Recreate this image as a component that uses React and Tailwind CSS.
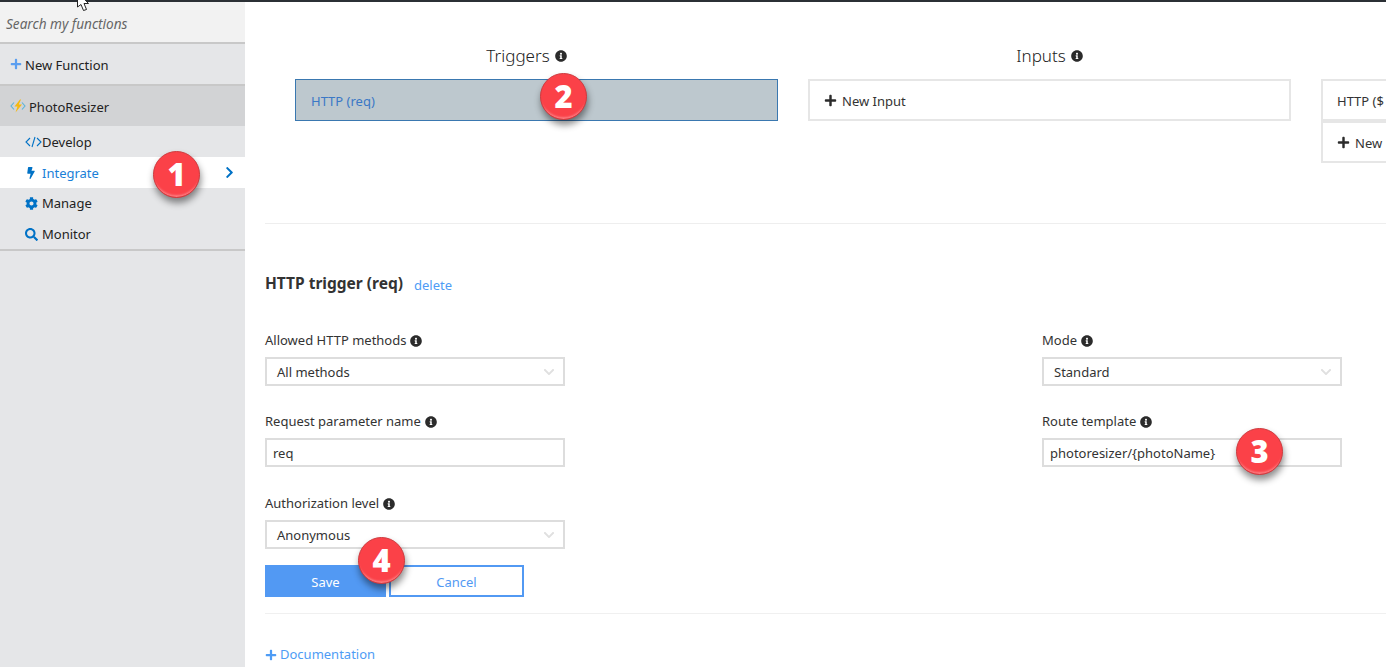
import { FaInfoCircle, FaPlus, FaBolt, FaCog, FaSearch, FaChevronRight, FaChevronDown } from 'react-icons/fa';

const FONT = { fontFamily: '"Noto Sans", "Open Sans", sans-serif' };

function Info({ className = '' }) {
  return <FaInfoCircle className={`inline-block text-[#2b2b2b] text-[12px] ${className}`} />;
}

// red numbered callout, sits on top of the page
function Badge({ n, className }) {
  return (
    <div
      className={`absolute w-[47px] h-[47px] rounded-full flex items-center justify-center text-white text-[31px] font-extrabold bg-[#fb4148] border border-[#cf3a3e] shadow-[1px_5px_7px_rgba(0,0,0,0.45),inset_0_-4px_2px_-2px_rgba(255,255,255,0.3)] ${className}`}
      style={{ fontFamily: '"Open Sans", sans-serif' }}
    >
      {n}
    </div>
  );
}

function NavRow({ icon, label, active, nudge }) {
  return (
    <div className={`h-[31px] flex items-center pl-[25px] pr-[9px] ${active ? 'bg-white text-[#1a7fd8]' : 'text-[#222]'}`}>
      <span className="w-[17px] flex justify-start text-[#0072c6] text-[13px]">{icon}</span>
      <span className={`text-[13px] ${nudge ? 'pt-[2px]' : ''}`}>{label}</span>
      {active && <FaChevronRight className="ml-auto text-[#0072c6] text-[13px]" />}
    </div>
  );
}

function Select({ value }) {
  return (
    <div className="h-[29px] w-[300px] border-2 border-[#dddddd] bg-white flex items-center pl-[10px] pr-[8px] text-[13px] text-[#333]">
      <span className="pt-[2px]">{value}</span>
      <FaChevronDown className="ml-auto text-[#e0e0e0] text-[12px]" />
    </div>
  );
}

function TextInput({ value }) {
  return (
    <div className="h-[29px] w-[300px] border-2 border-[#dddddd] bg-white flex items-center pl-[6px] pt-[2px] text-[13px] text-[#333]">
      {value}
    </div>
  );
}

function Field({ label, children, className = '' }) {
  return (
    <div className={className}>
      <div className="h-[17px] flex items-center gap-[4px] text-[13px] text-[#333] leading-none">
        {label} <Info />
      </div>
      <div className="mt-[8px]">{children}</div>
    </div>
  );
}

function BoxRow({ children, className = '' }) {
  return (
    <div className={`h-[42px] border-2 border-[#e6e6e6] flex items-center pl-[14px] text-[13px] text-[#333] whitespace-nowrap ${className}`}>
      {children}
    </div>
  );
}

function NewRow({ label, className = '' }) {
  return (
    <BoxRow className={className}>
      <FaPlus className="text-[#2b2b2b] text-[13px] mr-[5px] shrink-0" />
      <span className="pt-[4px]">{label}</span>
    </BoxRow>
  );
}

function ColHead({ title, className = '' }) {
  return (
    <div className={`h-[33px] mb-[7px] flex items-center justify-center gap-[5px] text-[17px] font-light text-[#222] ${className}`}>
      {title} <Info />
    </div>
  );
}

export default function App() {
  return (
    <div className="relative w-[1386px] h-[667px] overflow-hidden bg-white flex flex-col" style={FONT}>
      <div className="h-[2px] bg-[#2b3035] shrink-0" />

      <div className="flex flex-1 min-h-0">
        {/* Sidebar */}
        <aside className="w-[245px] shrink-0 bg-[#e5e6e8]">
          <div className="h-[42px] bg-[#f2f2f2] border-b-2 border-[#c8c8c8] flex items-center pl-[6px] pt-[4px] text-[13.6px] italic text-[#666]">
            Search my functions
          </div>
          <div className="h-[42px] border-b-2 border-[#c8c8c8] flex items-center pl-[10px] text-[13px] text-[#222]">
            <FaPlus className="text-[#5c9ff0] text-[12px] mr-[3px]" />
            <span className="pt-[4px]">New Function</span>
          </div>
          <div className="h-[40px] bg-[#d2d3d5] flex items-center pl-[10px] text-[13px] text-[#222]">
            <svg width="16" height="14" viewBox="0 0 16 14" className="mr-[3px]">
              <path d="M4 3.5 L1 7 L4 10.5" fill="none" stroke="#59b4d9" strokeWidth="1.1" />
              <path d="M12 3.5 L15 7 L12 10.5" fill="none" stroke="#59b4d9" strokeWidth="1.1" />
              <path d="M10 0.5 L4.5 7.5 H7.5 L5.5 13.5 L12 5.5 H8.8 L11 0.5 Z" fill="#f5b90f" />
            </svg>
            <span className="pt-[4px]">PhotoResizer</span>
          </div>
          <div className="border-b-2 border-[#c8c8c8] h-[125px]">
            <NavRow
              label="Develop"
              nudge
              icon={
                <svg width="17" height="12" viewBox="0 0 17 12" fill="none" stroke="#0072c6" strokeWidth="1.1">
                  <path d="M5 2 L1 6 L5 10" />
                  <path d="M10 1 L7 11" />
                  <path d="M12 2 L16 6 L12 10" />
                </svg>
              }
            />
            <NavRow label="Integrate" nudge active icon={<FaBolt className="text-[12px]" />} />
            <NavRow label="Manage" icon={<FaCog className="text-[13px]" />} />
            <NavRow label="Monitor" icon={<FaSearch className="text-[13px]" />} />
          </div>
        </aside>

        {/* Main */}
        <main className="flex-1 min-w-0 overflow-hidden pl-[20px]">
          <div className="flex gap-[30px] pl-[30px] pt-[37px] h-[222px] border-b border-[#eeeeee]">
            <div className="w-[483px] shrink-0">
              <ColHead title="Triggers" className="pr-[20px]" />
              <div className="h-[42px] bg-[#bdc8ce] border border-[#3a78b0] flex items-center pl-[15px] pt-[4px] text-[13px] text-[#3b78c6]">
                HTTP (req)
              </div>
            </div>
            <div className="w-[483px] shrink-0">
              <ColHead title="Inputs" />
              <NewRow label="New Input" />
            </div>
            <div className="w-[483px] shrink-0">
              <div className="h-[40px]" />
              <BoxRow className="pt-[4px]">HTTP ($</BoxRow>
              <NewRow label="New" />
            </div>
          </div>

          <div className="mt-[50px] h-[20px] flex items-center text-[#333]">
            <span className="text-[15.5px] font-bold">HTTP trigger (req)</span>
            <span className="ml-[11px] pt-[4px] text-[13px] text-[#4e9cf5]">delete</span>
          </div>

          <div className="mt-[38px] flex justify-between w-[1077px]">
            <div>
              <Field label="Allowed HTTP methods"><Select value="All methods" /></Field>
              <Field label="Request parameter name" className="mt-[27px]"><TextInput value="req" /></Field>
              <Field label="Authorization level" className="mt-[28px]"><Select value="Anonymous" /></Field>
            </div>
            <div>
              <Field label="Mode"><Select value="Standard" /></Field>
              <Field label="Route template" className="mt-[27px]"><TextInput value="photoresizer/{photoName}" /></Field>
            </div>
          </div>

          <div className="mt-[16px] flex gap-[3px]">
            <div className="w-[121px] h-[32px] bg-[#5299f3] text-white text-[13px] pt-[4px] flex items-center justify-center">Save</div>
            <div className="w-[135px] h-[32px] border-2 border-[#5299f3] text-[#5299f3] text-[13px] pt-[4px] flex items-center justify-center">Cancel</div>
          </div>

          <div className="mt-[16px] border-t border-[#f0f0f0]" />

          <div className="mt-[31px] flex items-center text-[13px] text-[#4e9cf5]">
            <FaPlus className="text-[12px] mr-[3px]" />
            Documentation
          </div>
        </main>
      </div>

      {/* Callouts */}
      <Badge n="1" className="left-[153px] top-[151px]" />
      <Badge n="2" className="left-[540px] top-[73px]" />
      <Badge n="3" className="left-[1236px] top-[428px]" />
      <Badge n="4" className="left-[358px] top-[537px]" />

      {/* Mouse pointer */}
      <svg width="16" height="14" viewBox="0 0 16 14" className="absolute left-[77px] top-0">
        <path d="M0.5 -8 L0.5 7 L4 4.5 L6.5 10.5 L9.5 9.5 L7 3.5 L11.5 3.5 Z" fill="#fff" stroke="#222" strokeWidth="1" />
      </svg>
    </div>
  );
}
